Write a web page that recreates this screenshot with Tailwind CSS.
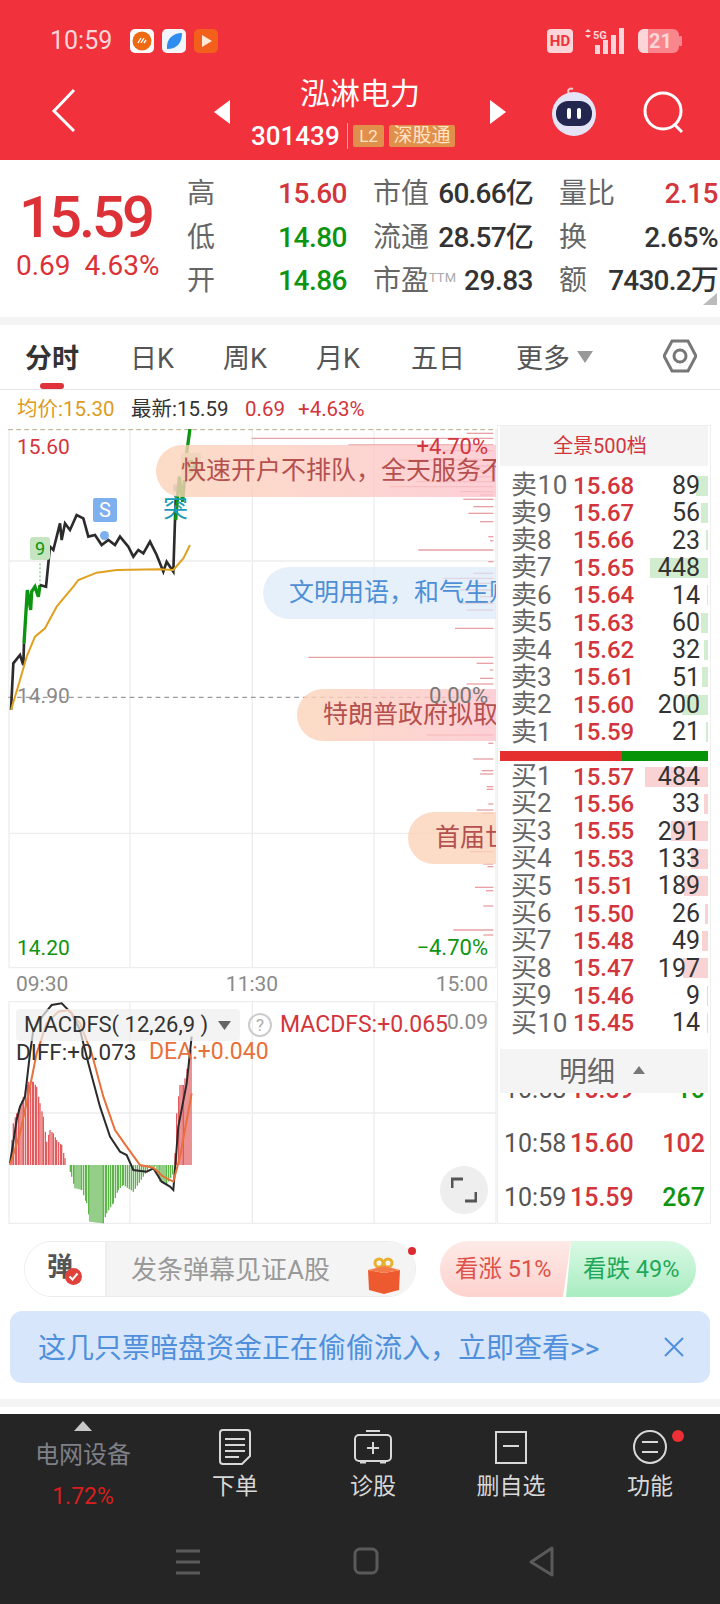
<!DOCTYPE html>
<html lang="zh-CN">
<head>
<meta charset="UTF-8">
<title>泓淋电力</title>
<script src="https://cdn.jsdelivr.net/npm/@tailwindcss/browser@4"></script>
</head>
<body class="w-[720px] h-[1604px] overflow-hidden bg-white font-[Roboto,'Noto_Sans_CJK_SC',sans-serif]">

<!-- Header -->
<div class="h-[160px] bg-[#f1323c] text-white">
  <!-- status bar -->
  <div class="h-[82px] flex items-center pl-[50px] pr-[38px]">
    <span class="text-[25px] text-[#fbd5d7] w-[80px]">10:59</span>
    <div class="flex gap-[8px]">
      <svg class="w-[24px] h-[24px]" viewBox="0 0 24 24"><rect width="24" height="24" rx="5" fill="#fff"/><circle cx="12" cy="12" r="9.500" fill="#ee6a12"/><path d="M8 14l3-5M11 14l3-5M14 14l2-3" stroke="#fff" stroke-width="1.4"/></svg>
      <svg class="w-[24px] h-[24px]" viewBox="0 0 24 24"><rect width="24" height="24" rx="5" fill="#f2f6fb"/><path d="M5 20C4 10 11 4 20 4c0 10-5 16-15 16z" fill="#2f8df0"/></svg>
      <svg class="w-[24px] h-[24px]" viewBox="0 0 24 24"><rect width="24" height="24" rx="5" fill="#f2601c"/><path d="M8 6l10 6-10 6z" fill="#ffe9d8"/></svg>
    </div>
    <div class="ml-auto flex items-center">
      <div class="w-[26px] h-[24px] rounded-[4px] bg-[#fbd5d7] text-[#f1323c] text-[15px] font-bold leading-[24px] text-center">HD</div>
      <svg class="w-[46px] h-[26px] ml-[8px]" viewBox="0 0 46 26"><path d="M4 4l3-3 3 3zM4 7l3 3 3-3z" fill="#fbd5d7"/><text x="12" y="11" font-size="11" font-weight="700" fill="#fbd5d7">5G</text><g fill="#fbd5d7"><rect x="14" y="17" width="5" height="9"/><rect x="22" y="12" width="5" height="14"/><rect x="30" y="7" width="5" height="19"/><rect x="38" y="0" width="5" height="26"/></g></svg>
      <svg class="w-[44px] h-[24px] ml-[11px]" viewBox="0 0 44 24"><rect width="41" height="24" rx="6" fill="#f8868c"/><path d="M6 0h4v24H6a6 6 0 0 1-6-6V6a6 6 0 0 1 6-6z" fill="#fbd5d7"/><rect x="41" y="7" width="3" height="10" rx="1" fill="#f8868c"/><text x="11" y="19" font-size="20" font-weight="700" fill="#fbd5d7">21</text></svg>
    </div>
  </div>
  <!-- title row -->
  <div class="h-[78px] relative">
    <svg class="absolute left-[50px] top-[6px] w-[26px] h-[44px]" viewBox="0 0 26 44" fill="none" stroke="#fff" stroke-width="3"><path d="M24 2L4 23l20 20"/></svg>
    <svg class="absolute left-[214px] top-[18px] w-[16px] h-[24px]" viewBox="0 0 16 24"><path d="M16 0v24L0 12z" fill="#fff"/></svg>
    <svg class="absolute left-[490px] top-[18px] w-[16px] h-[24px]" viewBox="0 0 16 24"><path d="M0 0v24l16-12z" fill="#fff"/></svg>
    <div class="absolute left-[240px] w-[240px] top-[-4px] text-center text-[30px] leading-[32px]">泓淋电力</div>
    <div class="absolute left-[251px] top-[40px] flex items-center h-[28px]">
      <span class="text-[26px] font-medium w-[97px] border-r border-[#f7a0a0] leading-[26px]">301439</span>
      <span class="ml-[5px] w-[31px] h-[22px] bg-[#e0904a] text-[#ffe4c8] text-[17px] leading-[22px] text-center rounded-[2px]">L2</span>
      <span class="ml-[5px] w-[66px] h-[22px] bg-[#e0904a] text-[#ffe4c8] text-[19px] leading-[22px] text-center rounded-[2px]">深股通</span>
    </div>
    <svg class="absolute left-[547px] top-[4px] w-[54px] h-[50px]" viewBox="0 0 52 50"><path d="M22 8c-4-2-1-7 3-5" fill="none" stroke="#f6c9cf" stroke-width="2"/><circle cx="26" cy="28" r="22" fill="#e4e4f6"/><rect x="8" y="15" width="36" height="25" rx="12" fill="#23264f"/><rect x="19" y="22" width="4" height="11" rx="2" fill="#fff"/><rect x="29" y="22" width="4" height="11" rx="2" fill="#fff"/></svg>
    <svg class="absolute left-[642px] top-[8px] w-[44px] h-[44px]" viewBox="0 0 44 44" fill="none" stroke="#fff" stroke-width="3"><circle cx="21" cy="21" r="18"/><path d="M33 35l7 7"/></svg>
  </div>
</div>

<!-- Quote -->
<div class="h-[157px] relative">
  <div class="absolute left-[19px] top-[24px] text-[58px] font-medium leading-[66px] text-[#dc3237] tracking-[-3px]">15.59</div>
  <div class="absolute left-[16px] top-[88px] text-[28px] leading-[36px] text-[#dc3237] whitespace-pre">0.69  4.63%</div>
  <div class="absolute left-[187px] top-[12px] w-[160px] text-[28px] leading-[43.5px] text-[#666] whitespace-nowrap">
    <div class="flex justify-between"><span>高</span><span class="font-medium text-[#d2353b] tracking-[-0.5px]">15.60</span></div>
    <div class="flex justify-between"><span>低</span><span class="font-medium text-[#0d9410] tracking-[-0.5px]">14.80</span></div>
    <div class="flex justify-between"><span>开</span><span class="font-medium text-[#0d9410] tracking-[-0.5px]">14.86</span></div>
  </div>
  <div class="absolute left-[373px] top-[12px] w-[160px] text-[28px] leading-[43.5px] text-[#666] whitespace-nowrap">
    <div class="flex justify-between"><span>市值</span><span class="font-medium text-[#333] tracking-[-0.8px]">60.66亿</span></div>
    <div class="flex justify-between"><span>流通</span><span class="font-medium text-[#333] tracking-[-0.8px]">28.57亿</span></div>
    <div class="flex justify-between"><span>市盈<span class="text-[13px] leading-none align-[8px] text-[#aaa]">TTM</span></span><span class="font-medium text-[#333] tracking-[-0.5px]">29.83</span></div>
  </div>
  <div class="absolute left-[559px] top-[12px] w-[159px] text-[28px] leading-[43.5px] text-[#666] whitespace-nowrap">
    <div class="flex justify-between"><span>量比</span><span class="font-medium text-[#d2353b] tracking-[-0.5px]">2.15</span></div>
    <div class="flex justify-between"><span>换</span><span class="font-medium text-[#333] tracking-[-0.5px]">2.65%</span></div>
    <div class="flex justify-between"><span>额</span><span class="font-medium text-[#333] tracking-[-0.8px]">7430.2万</span></div>
  </div>
  <svg class="absolute left-[703px] top-[133px] w-[14px] h-[12px]" viewBox="0 0 14 12"><path d="M14 0v12H0z" fill="#bbb"/></svg>
</div>
<div class="h-[8px] bg-[#f4f4f4]"></div>

<!-- Tabs -->
<div class="h-[65px] border-b border-[#e6e6e6] relative text-[27px] text-[#555]">
  <span class="absolute left-[25px] top-[14px] font-bold text-[#333]">分时</span>
  <div class="absolute left-[40px] top-[58px] w-[24px] h-[6px] rounded-full bg-[#e0323a]"></div>
  <span class="absolute left-[130px] top-[14px]">日K</span>
  <span class="absolute left-[223px] top-[14px]">周K</span>
  <span class="absolute left-[316px] top-[14px]">月K</span>
  <span class="absolute left-[411px] top-[14px]">五日</span>
  <span class="absolute left-[516px] top-[14px]">更多</span>
  <svg class="absolute left-[577px] top-[26px] w-[16px] h-[12px]" viewBox="0 0 16 12"><path d="M0 0h16L8 12z" fill="#999"/></svg>
  <svg class="absolute left-[663px] top-[13px] w-[34px] h-[36px]" viewBox="0 0 34 36" fill="none" stroke="#777" stroke-width="3"><path d="M9 3h16l8 15-8 15H9L1 18z"/><circle cx="17" cy="18" r="6"/></svg>
</div>

<!-- Chart + order book -->
<div class="h-[834px] flex">
  <div class="w-[497px] flex flex-col">
    <div class="h-[39px] flex items-center pl-[17px] text-[20.500px] text-[#333] whitespace-nowrap">
      <span class="text-[#dc9b22] w-[114px]">均价:15.30</span>
      <span class="w-[114px]">最新:15.59</span>
      <span class="text-[#d2353b] w-[53px]">0.69</span>
      <span class="text-[#d2353b]">+4.63%</span>
    </div>

    <!-- main chart -->
    <div class="h-[540px] relative overflow-hidden">
      <svg id="price" class="absolute left-0 top-0 w-[500px] h-[540px]" viewBox="0 327 1500 1620" fill="none">
        <g stroke="#ededed" stroke-width="4">
          <path d="M27 327V1943M390 327V1943M757 327V1943M1122 327V1943M1488 327V1943M25 723H1488M25 1540H1488M25 1943H1488"/>
        </g>
        <path d="M25 329H1480" stroke="#b9a988" stroke-width="3" stroke-dasharray="14 10"/>
        <g id="depth" stroke="#e8a0a4" stroke-width="4"></g>
        <path d="M25 1132H1480" stroke="#9a9a9a" stroke-width="4" stroke-dasharray="14 12"/>
        <path d="M120 730V800" stroke="#5cb85c" stroke-width="3" stroke-dasharray="6 6"/>
        <rect x="520" y="493" width="12" height="22" fill="#8fb0c8"/>
        <path d="M33 1170L40 1030 60 1005 70 1035 72 970" stroke="#2b2b2b" stroke-width="8"/>
        <path d="M72 970L82 810 92 870 95 815 105 800 115 830 120 795" stroke="#0d9410" stroke-width="10"/>
        <path d="M120 795L138 800 150 680 160 690 180 610 185 660 195 610 210 630 230 585 250 595 265 650 285 645 305 675 325 660 345 675 360 650 385 680 400 710 415 690 430 700 450 665 470 705 490 755 500 725 520 755 527 540" stroke="#2b2b2b" stroke-width="8"/>
        <path d="M527 600L538 470 548 545 560 400 570 325" stroke="#0d9410" stroke-width="10"/>
        <path d="M33 1170L60 1080 80 1010 105 950 135 925 170 860 220 800 235 780 290 758 350 750 480 748 520 750 550 715 570 675" stroke="#e0a020" stroke-width="6"/>
      </svg>

      <!-- markers -->
      <div class="absolute left-[30px] top-[108px] w-[20px] h-[23px] bg-[#c5e5c0] rounded-[3px] text-[#0d9410] text-[18px] leading-[23px] text-center">9</div>
      <div class="absolute left-[93px] top-[69px] w-[24px] h-[24px] bg-[#7fb0ee] rounded-[2px] text-white text-[20px] leading-[24px] text-center">S</div>
      <div class="absolute left-[100px] top-[102px] w-[9px] h-[9px] rounded-full bg-[#7fb0ee]"></div>
      <div class="absolute left-[181px] top-[24px] w-[20px] h-[27px] bg-[#c5e5c0] rounded-[3px] text-[#0d9410] text-[18px] leading-[27px] text-center">9</div>
      <div class="absolute left-[163px] top-[66px] text-[25px] leading-[28px] text-[#1a9bb5]">突</div>

      <!-- barrage -->
      <div class="absolute left-[156px] top-[16px] w-[340px] h-[52px] overflow-hidden rounded-l-full bg-linear-to-r from-[#fbd3b8]/80 to-[#fdc4cd]/80 text-[#b5504f] text-[25px] leading-[52px] pl-[25px] whitespace-nowrap">快速开户不排队，全天服务不停</div>
      <div class="absolute left-[263px] top-[138px] w-[233px] h-[52px] overflow-hidden rounded-l-full bg-[#dce9fa]/70 text-[#4d8fd6] text-[25px] leading-[52px] pl-[26px] whitespace-nowrap">文明用语，和气生财</div>
      <div class="absolute left-[297px] top-[260px] w-[199px] h-[52px] overflow-hidden rounded-l-full bg-linear-to-r from-[#fbd3b8]/80 to-[#fdc4cd]/80 text-[#b5504f] text-[25px] leading-[52px] pl-[26px] whitespace-nowrap">特朗普政府拟取消</div>
      <div class="absolute left-[408px] top-[383px] w-[88px] h-[52px] overflow-hidden rounded-l-full bg-[#fbd3b8]/80 text-[#b5504f] text-[25px] leading-[52px] pl-[27px] whitespace-nowrap">首届世界</div>

      <!-- axis labels -->
      <span class="absolute left-[17px] top-[3px] text-[21px] leading-[30px] text-[#d2353b]">15.60</span>
      <span class="absolute right-[9px] top-[3px] text-[22px] leading-[30px] text-[#d2353b]">+4.70%</span>
      <span class="absolute left-[17px] top-[252px] text-[21px] leading-[30px] text-[#8a8a8a]">14.90</span>
      <span class="absolute right-[9px] top-[252px] text-[22px] leading-[30px] text-[#777]">0.00%</span>
      <span class="absolute left-[17px] top-[504px] text-[21px] leading-[30px] text-[#0d9410]">14.20</span>
      <span class="absolute right-[9px] top-[504px] text-[22px] leading-[30px] text-[#0d9410]">−4.70%</span>
    </div>

    <!-- time axis -->
    <div class="h-[32px] flex justify-between items-center pl-[16px] pr-[9px] text-[21px] text-[#8a8a8a]">
      <span>09:30</span><span>11:30</span><span>15:00</span>
    </div>

    <!-- MACD -->
    <div class="h-[223px] relative overflow-hidden">
      <svg id="macd" class="absolute left-0 top-0 w-[500px] h-[223px]" viewBox="0 33 1500 669" fill="none">
        <path d="M27 33V700M390 33V700M757 33V700M1122 33V700M1488 33V700M25 35H1488M25 369H1488M25 700H1488" stroke="#ededed" stroke-width="4"/>
        <g id="hist" stroke-width="4"></g>
      </svg>
      <div class="absolute left-[16px] top-[8px] w-[224px] h-[32px] rounded-[4px] bg-[#eeeeee]/70 pl-[8px] text-[22px] leading-[32px] text-[#333] whitespace-nowrap">MACDFS( 12,26,9 )</div>
      <svg class="absolute left-[218px] top-[20px] w-[13px] h-[9px]" viewBox="0 0 13 9"><path d="M0 0h13L6.500 9z" fill="#666"/></svg>
      <div class="absolute left-[248px] top-[12px] w-[24px] h-[24px] rounded-full border-2 border-[#ccc] text-[#aaa] text-[17px] leading-[20px] text-center">?</div>
      <span class="absolute left-[280px] top-[8px] text-[23px] leading-[32px] text-[#d2353b] whitespace-nowrap">MACDFS:+0.065</span>
      <span class="absolute right-[9px] top-[6px] text-[21px] leading-[30px] text-[#8a8a8a]">0.09</span>
      <span class="absolute left-[16px] top-[36px] text-[22.500px] leading-[30px] text-[#333] whitespace-nowrap">DIFF:+0.073</span>
      <span class="absolute left-[149px] top-[36px] text-[23px] leading-[30px] text-[#e8703a] whitespace-nowrap">DEA:+0.040</span>
      <div class="absolute left-[440px] top-[165px] w-[48px] h-[48px] rounded-full bg-[#eeeeee] flex items-center justify-center">
        <svg class="w-[26px] h-[26px]" viewBox="0 0 26 26" fill="none" stroke="#555" stroke-width="3"><path d="M1 11V2h11M25 15v9H14"/></svg>
      </div>
    </div>
  </div>

  <!-- Order book -->
  <div class="w-[214px] pt-[35px]">
    <div class="h-full border border-[#eeeeee] px-[2px] flex flex-col">
      <div class="h-[40px] bg-[#f4f4f4] text-center text-[20px] leading-[40px] text-[#d2353b] shrink-0 pr-[8px]">全景500档</div>
      <div class="mt-[6px] text-[#333]">
        <div class="h-[27.4px] relative flex items-center text-[25px]"><div class="absolute right-0 top-[3.700px] h-[20px] w-[12px] bg-[#d2ecd0]"></div><span class="relative w-[73px] pl-[11px] text-[26px] text-[#666] whitespace-nowrap tracking-[0.6px]">卖10</span><span class="relative w-[57px] text-[24px] font-medium text-[#d2353b]">15.68</span><span class="relative w-[70px] text-right">89</span></div>
        <div class="h-[27.4px] relative flex items-center text-[25px]"><div class="absolute right-0 top-[3.700px] h-[20px] w-[7px] bg-[#d2ecd0]"></div><span class="relative w-[73px] pl-[11px] text-[26px] text-[#666] whitespace-nowrap">卖9</span><span class="relative w-[57px] text-[24px] font-medium text-[#d2353b]">15.67</span><span class="relative w-[70px] text-right">56</span></div>
        <div class="h-[27.4px] relative flex items-center text-[25px]"><div class="absolute right-0 top-[3.700px] h-[20px] w-[2px] bg-[#d2ecd0]"></div><span class="relative w-[73px] pl-[11px] text-[26px] text-[#666] whitespace-nowrap">卖8</span><span class="relative w-[57px] text-[24px] font-medium text-[#d2353b]">15.66</span><span class="relative w-[70px] text-right">23</span></div>
        <div class="h-[27.4px] relative flex items-center text-[25px]"><div class="absolute right-0 top-[3.700px] h-[20px] w-[58px] bg-[#d2ecd0]"></div><span class="relative w-[73px] pl-[11px] text-[26px] text-[#666] whitespace-nowrap">卖7</span><span class="relative w-[57px] text-[24px] font-medium text-[#d2353b]">15.65</span><span class="relative w-[70px] text-right">448</span></div>
        <div class="h-[27.4px] relative flex items-center text-[25px]"><div class="absolute right-0 top-[3.700px] h-[20px] w-[1px] bg-[#d2ecd0]"></div><span class="relative w-[73px] pl-[11px] text-[26px] text-[#666] whitespace-nowrap">卖6</span><span class="relative w-[57px] text-[24px] font-medium text-[#d2353b]">15.64</span><span class="relative w-[70px] text-right">14</span></div>
        <div class="h-[27.4px] relative flex items-center text-[25px]"><div class="absolute right-0 top-[3.700px] h-[20px] w-[7px] bg-[#d2ecd0]"></div><span class="relative w-[73px] pl-[11px] text-[26px] text-[#666] whitespace-nowrap">卖5</span><span class="relative w-[57px] text-[24px] font-medium text-[#d2353b]">15.63</span><span class="relative w-[70px] text-right">60</span></div>
        <div class="h-[27.4px] relative flex items-center text-[25px]"><div class="absolute right-0 top-[3.700px] h-[20px] w-[4px] bg-[#d2ecd0]"></div><span class="relative w-[73px] pl-[11px] text-[26px] text-[#666] whitespace-nowrap">卖4</span><span class="relative w-[57px] text-[24px] font-medium text-[#d2353b]">15.62</span><span class="relative w-[70px] text-right">32</span></div>
        <div class="h-[27.4px] relative flex items-center text-[25px]"><div class="absolute right-0 top-[3.700px] h-[20px] w-[6px] bg-[#d2ecd0]"></div><span class="relative w-[73px] pl-[11px] text-[26px] text-[#666] whitespace-nowrap">卖3</span><span class="relative w-[57px] text-[24px] font-medium text-[#d2353b]">15.61</span><span class="relative w-[70px] text-right">51</span></div>
        <div class="h-[27.4px] relative flex items-center text-[25px]"><div class="absolute right-0 top-[3.700px] h-[20px] w-[26px] bg-[#d2ecd0]"></div><span class="relative w-[73px] pl-[11px] text-[26px] text-[#666] whitespace-nowrap">卖2</span><span class="relative w-[57px] text-[24px] font-medium text-[#d2353b]">15.60</span><span class="relative w-[70px] text-right">200</span></div>
        <div class="h-[27.4px] relative flex items-center text-[25px]"><div class="absolute right-0 top-[3.700px] h-[20px] w-[2px] bg-[#d2ecd0]"></div><span class="relative w-[73px] pl-[11px] text-[26px] text-[#666] whitespace-nowrap">卖1</span><span class="relative w-[57px] text-[24px] font-medium text-[#d2353b]">15.59</span><span class="relative w-[70px] text-right">21</span></div>
      </div>
      <div class="mt-[4.700px] h-[10px] flex shrink-0"><div class="w-[122px] bg-[#e52e2e]"></div><div class="flex-1 bg-[#079307]"></div></div>
      <div class="mt-[2.300px] text-[#333]">
        <div class="h-[27.4px] relative flex items-center text-[25px]"><div class="absolute right-0 top-[3.700px] h-[20px] w-[63px] bg-[#f9d3d3]"></div><span class="relative w-[73px] pl-[11px] text-[26px] text-[#666] whitespace-nowrap">买1</span><span class="relative w-[57px] text-[24px] font-medium text-[#d2353b]">15.57</span><span class="relative w-[70px] text-right">484</span></div>
        <div class="h-[27.4px] relative flex items-center text-[25px]"><div class="absolute right-0 top-[3.700px] h-[20px] w-[4px] bg-[#f9d3d3]"></div><span class="relative w-[73px] pl-[11px] text-[26px] text-[#666] whitespace-nowrap">买2</span><span class="relative w-[57px] text-[24px] font-medium text-[#d2353b]">15.56</span><span class="relative w-[70px] text-right">33</span></div>
        <div class="h-[27.4px] relative flex items-center text-[25px]"><div class="absolute right-0 top-[3.700px] h-[20px] w-[37px] bg-[#f9d3d3]"></div><span class="relative w-[73px] pl-[11px] text-[26px] text-[#666] whitespace-nowrap">买3</span><span class="relative w-[57px] text-[24px] font-medium text-[#d2353b]">15.55</span><span class="relative w-[70px] text-right">291</span></div>
        <div class="h-[27.4px] relative flex items-center text-[25px]"><div class="absolute right-0 top-[3.700px] h-[20px] w-[17px] bg-[#f9d3d3]"></div><span class="relative w-[73px] pl-[11px] text-[26px] text-[#666] whitespace-nowrap">买4</span><span class="relative w-[57px] text-[24px] font-medium text-[#d2353b]">15.53</span><span class="relative w-[70px] text-right">133</span></div>
        <div class="h-[27.4px] relative flex items-center text-[25px]"><div class="absolute right-0 top-[3.700px] h-[20px] w-[24px] bg-[#f9d3d3]"></div><span class="relative w-[73px] pl-[11px] text-[26px] text-[#666] whitespace-nowrap">买5</span><span class="relative w-[57px] text-[24px] font-medium text-[#d2353b]">15.51</span><span class="relative w-[70px] text-right">189</span></div>
        <div class="h-[27.4px] relative flex items-center text-[25px]"><div class="absolute right-0 top-[3.700px] h-[20px] w-[3px] bg-[#f9d3d3]"></div><span class="relative w-[73px] pl-[11px] text-[26px] text-[#666] whitespace-nowrap">买6</span><span class="relative w-[57px] text-[24px] font-medium text-[#d2353b]">15.50</span><span class="relative w-[70px] text-right">26</span></div>
        <div class="h-[27.4px] relative flex items-center text-[25px]"><div class="absolute right-0 top-[3.700px] h-[20px] w-[6px] bg-[#f9d3d3]"></div><span class="relative w-[73px] pl-[11px] text-[26px] text-[#666] whitespace-nowrap">买7</span><span class="relative w-[57px] text-[24px] font-medium text-[#d2353b]">15.48</span><span class="relative w-[70px] text-right">49</span></div>
        <div class="h-[27.4px] relative flex items-center text-[25px]"><div class="absolute right-0 top-[3.700px] h-[20px] w-[25px] bg-[#f9d3d3]"></div><span class="relative w-[73px] pl-[11px] text-[26px] text-[#666] whitespace-nowrap">买8</span><span class="relative w-[57px] text-[24px] font-medium text-[#d2353b]">15.47</span><span class="relative w-[70px] text-right">197</span></div>
        <div class="h-[27.4px] relative flex items-center text-[25px]"><div class="absolute right-0 top-[3.700px] h-[20px] w-[1px] bg-[#f9d3d3]"></div><span class="relative w-[73px] pl-[11px] text-[26px] text-[#666] whitespace-nowrap">买9</span><span class="relative w-[57px] text-[24px] font-medium text-[#d2353b]">15.46</span><span class="relative w-[70px] text-right">9</span></div>
        <div class="h-[27.4px] relative flex items-center text-[25px]"><div class="absolute right-0 top-[3.700px] h-[20px] w-[1px] bg-[#f9d3d3]"></div><span class="relative w-[73px] pl-[11px] text-[26px] text-[#666] whitespace-nowrap tracking-[0.6px]">买10</span><span class="relative w-[57px] text-[24px] font-medium text-[#d2353b]">15.45</span><span class="relative w-[70px] text-right">14</span></div>
      </div>
      <div class="mt-[12.700px] h-[44px] bg-[#f4f4f4] relative z-10 text-[28px] leading-[48px] text-[#666] shrink-0 pl-[59px]">明细
        <svg class="absolute left-[133px] top-[17px] w-[12px] h-[8px]" viewBox="0 0 12 8"><path d="M6 0l6 8H0z" fill="#777"/></svg>
      </div>
      <div class="flex-1 overflow-hidden text-[25px]">
        <div class="-mt-[31px] h-[54px] flex items-center"><span class="w-[70px] pl-[4px] text-[#555]">10:58</span><span class="w-[65px] font-medium text-[#d2353b]">15.59</span><span class="w-[70px] text-right font-medium text-[#0d9410]">10</span></div>
        <div class="h-[54px] flex items-center"><span class="w-[70px] pl-[4px] text-[#555]">10:58</span><span class="w-[65px] font-medium text-[#d2353b]">15.60</span><span class="w-[70px] text-right font-medium text-[#d2353b]">102</span></div>
        <div class="h-[54px] flex items-center"><span class="w-[70px] pl-[4px] text-[#555]">10:59</span><span class="w-[65px] font-medium text-[#d2353b]">15.59</span><span class="w-[70px] text-right font-medium text-[#0d9410]">267</span></div>
      </div>
    </div>
  </div>
</div>

<!-- Barrage input + vote -->
<div class="mt-[17px] h-[56px] relative">
  <div class="absolute left-[24px] top-0 w-[392px] h-[56px] rounded-full border border-[#ececec] overflow-hidden flex">
    <div class="w-[82px] bg-white border-r-2 border-[#eeeeee] pl-[22px] text-[26px] font-bold leading-[50px] text-[#555]">弹</div>
    <div class="flex-1 bg-[#f4f4f4] pl-[24px] text-[26px] leading-[56px] text-[#999]">发条弹幕见证A股</div>
  </div>
  <svg class="absolute left-[65px] top-[27px] w-[17px] h-[17px]" viewBox="0 0 17 17"><circle cx="8.500" cy="8.500" r="8.500" fill="#e0413a"/><path d="M4.500 8.500l3 3 5-6" fill="none" stroke="#fff" stroke-width="2"/></svg>
  <svg class="absolute left-[367px] top-[16px] w-[34px] h-[37px]" viewBox="0 0 34 37"><circle cx="12" cy="6" r="4" fill="none" stroke="#e8b030" stroke-width="3"/><circle cx="21" cy="6" r="4" fill="none" stroke="#e8b030" stroke-width="3"/><path d="M1 13l16 3 16-3-1 20-15 4-15-4z" fill="#ee5a30"/><path d="M1 13l16 3 16-3-16-4z" fill="#f47a4a"/></svg>
  <div class="absolute left-[408px] top-[6px] w-[8px] h-[8px] rounded-full bg-[#dc2b30]"></div>
  <div class="absolute left-[440px] top-0 w-[131px] h-[56px] rounded-l-full bg-linear-to-b from-[#fdeae7] to-[#fdd2ce] [clip-path:polygon(0_0,100%_0,94%_100%,0_100%)] pl-[15px] text-[23.500px] leading-[56px] text-[#e0504a] whitespace-nowrap">看涨 51%</div>
  <div class="absolute left-[566px] top-0 w-[130px] h-[56px] rounded-r-full bg-linear-to-b from-[#d9f9e5] to-[#a8ecc0] [clip-path:polygon(4%_0,100%_0,100%_100%,0_100%)] pl-[17px] text-[23.500px] leading-[56px] text-[#1fa85a] whitespace-nowrap">看跌 49%</div>
</div>

<!-- Banner -->
<div class="mt-[14px] mx-[10px] h-[72px] rounded-[12px] bg-[#d7e6fa] flex items-center pl-[28px] pr-[26px] pt-[3px] text-[28px] text-[#4f8fdc] whitespace-nowrap">
  <span>这几只票暗盘资金正在偷偷流入，立即查看&gt;&gt;</span>
  <svg class="ml-auto w-[20px] h-[20px] shrink-0 -mt-[3px]" viewBox="0 0 20 20" fill="none" stroke="#4f8fdc" stroke-width="2"><path d="M1 1l18 18M19 1L1 19"/></svg>
</div>

<div class="mt-[16px] h-[8px] bg-[#f4f4f4]"></div>
<div class="h-[7px]"></div>

<!-- Bottom nav -->
<div class="h-[190px] bg-[#252525]">
  <div class="h-[118px] flex text-[23px] text-[#d8d8d8]">
    <div class="w-[166px] relative text-center">
      <svg class="absolute left-[74px] top-[7px] w-[18px] h-[10px]" viewBox="0 0 18 10"><path d="M9 0l9 10H0z" fill="#c8c8c8"/></svg>
      <div class="absolute inset-x-0 top-[26px] leading-[30px] text-[24px] text-[#7f8088]">电网设备</div>
      <div class="absolute inset-x-0 top-[68px] leading-[30px] text-[23px] text-[#d81e1e]">1.72%</div>
    </div>
    <div class="w-[138px] flex flex-col items-center pt-[15px]">
      <svg class="w-[34px] h-[36px]" viewBox="0 0 34 36" fill="none" stroke="#d8d8d8" stroke-width="2"><path d="M5 1h24a3 3 0 0 1 3 3v23l-8 8H5a3 3 0 0 1-3-3V4a3 3 0 0 1 3-3z"/><path d="M7 10h20M7 16h20M7 22h20M7 28h14"/></svg>
      <span class="mt-[7px] leading-[30px]">下单</span>
    </div>
    <div class="w-[138px] flex flex-col items-center pt-[15px]">
      <svg class="w-[40px] h-[36px]" viewBox="0 0 40 36" fill="none" stroke="#d8d8d8" stroke-width="2"><path d="M13 2h14"/><rect x="2" y="6" width="36" height="26" rx="4"/><path d="M20 13v12M14 19h12"/><path d="M7 33h6M27 33h6" stroke-width="3"/></svg>
      <span class="mt-[7px] leading-[30px]">诊股</span>
    </div>
    <div class="w-[138px] flex flex-col items-center pt-[15px]">
      <svg class="w-[34px] h-[36px]" viewBox="0 0 34 36" fill="none" stroke="#d8d8d8" stroke-width="2"><rect x="2" y="3" width="30" height="31"/><path d="M9 17h16"/></svg>
      <span class="mt-[7px] leading-[30px]">删自选</span>
    </div>
    <div class="w-[140px] flex flex-col items-center pt-[15px] relative">
      <svg class="w-[36px] h-[36px]" viewBox="0 0 36 36" fill="none" stroke="#d8d8d8" stroke-width="2"><circle cx="18" cy="18" r="16"/><path d="M10 13h16M10 23h16"/></svg>
      <span class="mt-[7px] leading-[30px]">功能</span>
      <div class="absolute left-[92px] top-[16px] w-[12px] h-[12px] rounded-full bg-[#ee2f35]"></div>
    </div>
  </div>
  <svg class="w-[720px] h-[72px]" viewBox="0 0 720 72" fill="none" stroke="#5a5a5a" stroke-width="3">
    <path d="M176 19h24M176 30h24M176 41h24"/>
    <rect x="355" y="17" width="22" height="24" rx="5"/>
    <path d="M552 16v27L531 30z" stroke-linejoin="round"/>
  </svg>
</div>

<script>
  // depth ticks on the right of the price chart: [y, x start] in chart units
  var depth = [[340,1400],[355,755],[375,1045],[392,1330],[420,1195],[438,1330],[452,1420],[470,1400],[485,1250],[500,1170],[515,1380],[525,1440],[538,1390],[560,1420],[580,1405],[605,1440],[650,1465],[662,1470],[690,1255],[725,1465],[760,1420],[775,1330],[790,1420],[810,1380],[830,1440],[850,1380],[870,1400],[925,1365],[1012,925],[1030,1430],[1050,1470],[1075,1440],[1092,1400],[1245,1280],[1270,1465],[1317,1420],[1352,1445],[1362,1440],[1400,1460],[1408,1460],[1452,1465],[1470,1430],[1480,1445],[1595,1410],[1632,1450],[1640,1462],[1702,1425],[1712,1458],[1758,1450],[1830,1360],[1845,1450]];
  var NS = 'http://www.w3.org/2000/svg';
  function line(parent, x1, y1, x2, y2, color) {
    var l = document.createElementNS(NS, 'line');
    l.setAttribute('x1', x1); l.setAttribute('y1', y1);
    l.setAttribute('x2', x2); l.setAttribute('y2', y2);
    if (color) l.setAttribute('stroke', color);
    parent.appendChild(l);
  }
  var d = document.getElementById('depth');
  depth.forEach(function (p) { line(d, p[1], p[0], 1480, p[0]); });

  // macd histogram envelope, interpolated between the picked points
  var RED = '#e35b5e', GREEN = '#5fb54c', BASE = 525;
  var env = [
    [RED, [[30,525],[40,400],[50,370],[60,350],[70,320],[85,275],[100,275],[110,290],[120,340],[130,380],[140,455],[150,420],[160,430],[170,450],[185,465],[195,505],[200,525]]],
    [GREEN, [[205,525],[215,560],[225,595],[245,600],[260,640],[270,695],[310,700],[320,670],[340,640],[355,600],[370,585],[400,605],[430,560],[450,530],[465,530],[480,575],[500,585],[520,550]]],
    [RED, [[525,490],[530,370],[540,285],[550,285],[555,265],[575,170]]]
  ];
  var h = document.getElementById('hist');
  env.forEach(function (e) {
    var pts = e[1];
    for (var i = 0; i < pts.length - 1; i++) {
      for (var x = pts[i][0]; x < pts[i + 1][0]; x += 6) {
        var t = (x - pts[i][0]) / (pts[i + 1][0] - pts[i][0]);
        line(h, x, BASE, x, pts[i][1] + t * (pts[i + 1][1] - pts[i][1]), e[0]);
      }
    }
  });
  function poly(parent, pts, color, w) {
    var p = document.createElementNS(NS, 'path');
    p.setAttribute('d', pts); p.setAttribute('stroke', color); p.setAttribute('stroke-width', w);
    parent.appendChild(p);
  }
  var m = document.getElementById('macd');
  poly(m, 'M30 520L50 390 60 350 75 320 90 190 100 120 130 75 155 45 185 40 215 70 240 120 265 220 300 350 330 440 360 485 380 495 400 540 440 545 460 535 485 575 510 590 520 600 535 410 560 280 575 140', '#2b2b2b', 6);
  poly(m, 'M30 525L60 430 90 290 110 190 140 100 175 65 205 60 240 100 275 190 310 320 345 420 380 470 420 525 460 533 490 560 520 575 540 500 575 310', '#e8703a', 6);
</script>
</body>
</html>
